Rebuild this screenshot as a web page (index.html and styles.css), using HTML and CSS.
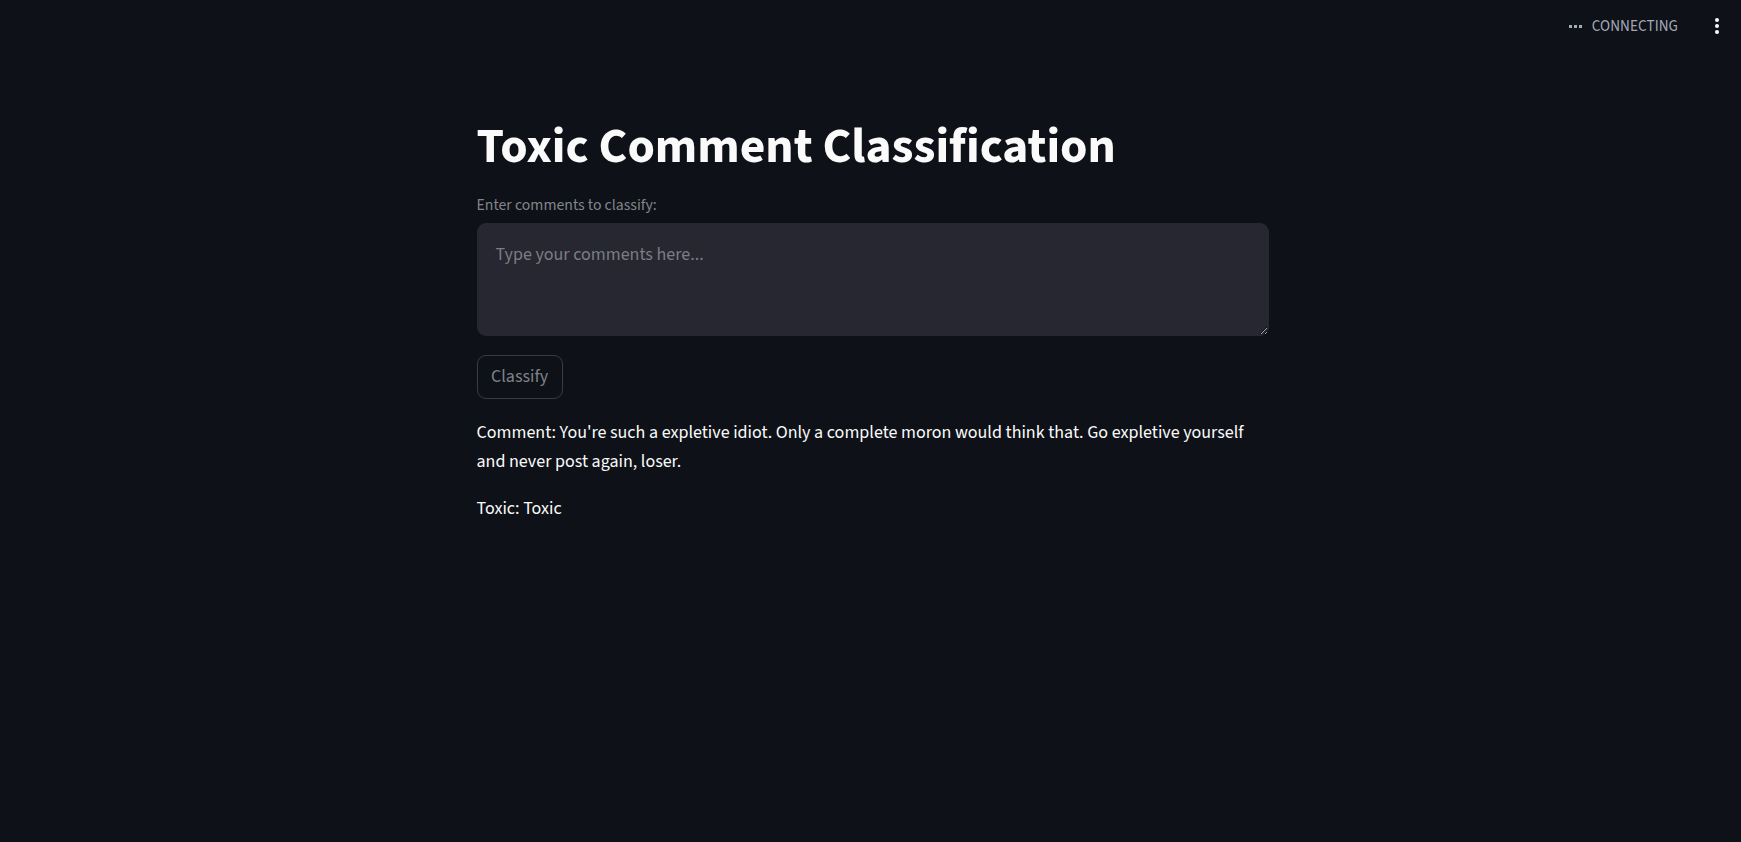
FILE: index.html
```html
<!DOCTYPE html>
<html lang="en">
<head>
<meta charset="utf-8">
<title>Toxic Comment Classification</title>
<link rel="stylesheet" href="styles.css">
</head>
<body>
<header class="app-header">
  <div class="status">
    <span class="status-dots"><i></i><i></i><i></i></span>
    <span class="status-label">CONNECTING</span>
  </div>
  <button class="menu-btn" aria-label="Main menu">
    <svg width="6" height="18" viewBox="0 0 6 18"><circle cx="3" cy="3" r="2" fill="#fafafa"/><circle cx="3" cy="9" r="2" fill="#fafafa"/><circle cx="3" cy="15" r="2" fill="#fafafa"/></svg>
  </button>
</header>
<main class="main">
  <div class="block">
    <h1 class="title">Toxic Comment Classification</h1>
    <label class="field-label" for="comments">Enter comments to classify:</label>
    <textarea id="comments" class="field-input" placeholder="Type your comments here..."></textarea>
    <div class="actions">
      <button class="btn">Classify</button>
    </div>
    <div class="result">
      <p>Comment: You're such a expletive idiot. Only a complete moron would think that. Go expletive yourself and never post again, loser.</p>
      <p>Toxic: Toxic</p>
    </div>
  </div>
</main>
</body>
</html>
```
FILE: styles.css
```css
* { box-sizing: border-box; }
html, body {
  margin: 0;
  padding: 0;
  background: #0e1117;
  color: #fafafa;
  font-family: "Source Sans 3", "Source Sans Pro", Lato, sans-serif;
  height: 100%;
}
.app-header {
  height: 52px;
  display: flex;
  justify-content: flex-end;
  align-items: center;
  padding-right: 19px;
}
.status {
  display: flex;
  align-items: center;
  gap: 10px;
  margin-right: 34px;
}
.status-dots {
  display: flex;
  gap: 2px;
  padding-top: 1px;
}
.status-dots i {
  display: block;
  width: 3px;
  height: 3px;
  background: #a3a8b8;
}
.status-label {
  font-size: 15.2px;
  letter-spacing: 0.05px;
  color: #a3a8b8;
  line-height: 20px;
}
.menu-btn {
  background: none;
  border: 0;
  padding: 0;
  width: 10px;
  height: 20px;
  display: flex;
  align-items: center;
  justify-content: center;
}
.main {
  display: flex;
  justify-content: center;
  padding-top: 65px;
  padding-left: 4px;
}
.block {
  width: 792px;
  display: flex;
  flex-direction: column;
}
.title {
  margin: 0;
  font-size: 49.5px;
  font-weight: 700;
  line-height: 59.4px;
  color: #fafafa;
}
.field-label {
  margin-top: 17px;
  font-size: 15.75px;
  line-height: 25.2px;
  color: #83858c;
}
.field-input {
  margin-top: 4.5px;
  width: 100%;
  height: 113px;
  background: #262730;
  border: 1px solid #262730;
  border-radius: 9px;
  padding: 17px 18px;
  font-family: inherit;
  font-size: 18px;
  line-height: 28.8px;
  color: #fafafa;
  resize: vertical;
  outline: none;
  color-scheme: dark;
}
.field-input::placeholder {
  color: #7c7d84;
}
.actions {
  margin-top: 19px;
  display: flex;
}
.btn {
  height: 44px;
  padding: 0 13.5px;
  border: 1px solid #3a3c43;
  border-radius: 9px;
  background: transparent;
  color: #7f828a;
  font-family: inherit;
  font-size: 18px;
  line-height: 28.8px;
}
.result {
  margin-top: 20px;
  font-size: 18px;
  line-height: 28.8px;
}
.result p {
  margin: 0 0 18px;
}
```
